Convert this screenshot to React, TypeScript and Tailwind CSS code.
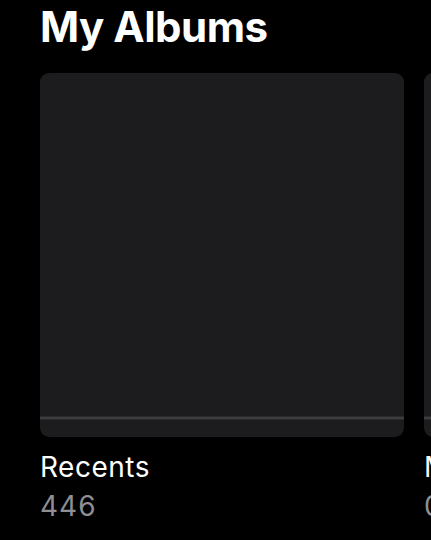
import React from 'react'

type Album = {
  title: string
  count: number
}

const albums: Album[] = [
  { title: 'Recents', count: 446 },
  { title: 'My Photo Stream', count: 0 }
]

function AlbumCard({ album }: { album: Album }) {
  return (
    <div className="w-[364px] shrink-0">
      <div className="h-[364px] rounded-[9px] bg-[#1c1c1e] flex flex-col justify-end overflow-hidden">
        <div className="h-[1px] bg-[#2a2a2c] mb-0" />
        <div className="h-[2px] bg-[#3d3d40]" />
        <div className="h-[1px] bg-[#2a2a2c] mb-[17px]" />
      </div>
      <div className="mt-[11px] text-[28px] leading-[39px] whitespace-nowrap">
        <p className="text-white tracking-[0.5px]">{album.title}</p>
        <p className="text-[#8e8e93] tracking-[1px]">{album.count}</p>
      </div>
    </div>
  )
}

export default function App() {
  return (
    <div
      className="w-[431px] h-[540px] bg-black overflow-hidden pl-[40px] pt-[6px]"
      style={{ fontFamily: 'Inter, "Liberation Sans", sans-serif' }}
    >
      <h1 className="text-white text-[42px] leading-[42px] font-bold tracking-[-0.5px]">
        My Albums
      </h1>
      <div className="mt-[25px] flex gap-[20px]">
        {albums.map((a) => (
          <AlbumCard key={a.title} album={a} />
        ))}
      </div>
    </div>
  )
}
